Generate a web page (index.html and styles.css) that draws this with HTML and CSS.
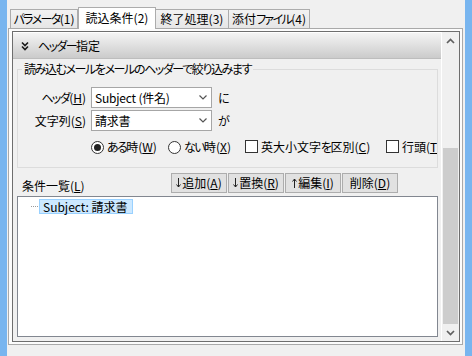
FILE: index.html
```html
<!DOCTYPE html>
<html lang="ja">
<head>
<meta charset="utf-8">
<title>読込条件</title>
<link rel="stylesheet" href="styles.css">
</head>
<body>
<div class="window">
  <div class="frame-side"></div>
  <div class="main">
    <div class="tabstrip">
      <div class="tab tab-1"><span class="kana">パラメータ</span>(1)</div>
      <div class="tab tab-active tab-2">読込条件(2)</div>
      <div class="tab tab-3">終了処理(3)</div>
      <div class="tab tab-4">添付<span class="kana">ファイル</span>(4)</div>
    </div>
    <div class="panel">
      <div class="scrollbox">
        <div class="content">
          <div class="section-bar">
            <svg class="chev-double" width="8" height="10" viewBox="0 0 8 10"><path d="M1 1.5 L4 4.5 L7 1.5 M1 5.5 L4 8.5 L7 5.5" fill="none" stroke="#1a1a1a" stroke-width="1.6"/></svg>
            <span><span class="kana">ヘッダー</span>指定</span>
          </div>
          <fieldset class="group">
            <legend class="legend-text">読み込むメールをメールのヘッダーで絞り込みます</legend>
            <div class="form-row">
              <span class="row-label"><span class="kana">ヘッダ</span>(<u>H</u>)</span>
              <div class="combo"><span class="combo-text">Subject (件名)</span><svg class="combo-arrow" width="8" height="5" viewBox="0 0 8 5"><path d="M0.5 0.5 L4 4 L7.5 0.5" fill="none" stroke="#555" stroke-width="1.2"/></svg></div>
              <span class="suffix">に</span>
            </div>
            <div class="form-row row-2">
              <span class="row-label">文字列(<u>S</u>)</span>
              <div class="combo"><span class="combo-text">請求書</span><svg class="combo-arrow" width="8" height="5" viewBox="0 0 8 5"><path d="M0.5 0.5 L4 4 L7.5 0.5" fill="none" stroke="#555" stroke-width="1.2"/></svg></div>
              <span class="suffix">が</span>
            </div>
            <div class="options-row">
              <span class="opt opt-w"><span class="radio checked"></span><span><span class="kana">ある</span>時(<u>W</u>)</span></span>
              <span class="opt opt-x"><span class="radio"></span><span><span class="kana">ない</span>時(<u>X</u>)</span></span>
              <span class="opt opt-c"><span class="checkbox"></span><span>英大小文字<span class="kana">を</span>区別(<u>C</u>)</span></span>
              <span class="opt opt-t"><span class="checkbox"></span><span>行頭(<u>T</u>)</span></span>
            </div>
          </fieldset>
          <div class="list-head">
            <span class="list-label">条件一覧(<u>L</u>)</span>
            <div class="buttons">
              <span class="btn"><svg class="arrow" width="5" height="10" viewBox="0 0 5 10"><path d="M2.5 0 V9 M0.5 6.5 L2.5 9 L4.5 6.5" fill="none" stroke="#222" stroke-width="1"/></svg>追加(<u>A</u>)</span>
              <span class="btn"><svg class="arrow" width="5" height="10" viewBox="0 0 5 10"><path d="M2.5 0 V9 M0.5 6.5 L2.5 9 L4.5 6.5" fill="none" stroke="#222" stroke-width="1"/></svg>置換(<u>R</u>)</span>
              <span class="btn"><svg class="arrow" width="5" height="10" viewBox="0 0 5 10"><path d="M2.5 10 V1 M0.5 3.5 L2.5 1 L4.5 3.5" fill="none" stroke="#222" stroke-width="1"/></svg>編集(<u>I</u>)</span>
              <span class="btn">削除(<u>D</u>)</span>
            </div>
          </div>
          <div class="list">
            <div class="tree-item">
              <span class="tree-line"></span>
              <span class="tree-label">Subject: 請求書</span>
            </div>
          </div>
        </div>
        <div class="vscroll">
          <div class="sb-btn"><svg width="9" height="6" viewBox="0 0 9 6"><path d="M1 5 L4.5 1.5 L8 5" fill="none" stroke="#606060" stroke-width="1.7"/></svg></div>
          <div class="sb-track"><div class="sb-thumb"></div></div>
          <div class="sb-btn"><svg width="9" height="6" viewBox="0 0 9 6"><path d="M1 1 L4.5 4.5 L8 1" fill="none" stroke="#606060" stroke-width="1.7"/></svg></div>
        </div>
      </div>
    </div>
  </div>
  <div class="frame-side"></div>
</div>
</body>
</html>
```

FILE: styles.css
```css
* { box-sizing: border-box; }
html, body {
  margin: 0;
  padding: 0;
  background: #f0f0f0;
}
body {
  font-family: "Noto Sans CJK JP", "Noto Sans", sans-serif;
  font-size: 12px;
  line-height: 16px;
  color: #000;
  font-feature-settings: "palt" 1;
}
u { text-decoration: underline; text-underline-offset: 1px; }

/* Meiryo UI-like narrow kana */
.kana { letter-spacing: -1.6px; }
.legend-text { letter-spacing: -1.4px; }
.combo-text { letter-spacing: -0.2px; }

.window {
  display: flex;
  width: 472px;
  height: 356px;
}
.frame-side {
  width: 7px;
  background: #78b5ef;
  flex-shrink: 0;
}
.main {
  width: 458px;
  display: flex;
  flex-direction: column;
}

/* tabs */
.tabstrip {
  height: 28px;
  display: flex;
  align-items: flex-end;
  padding-left: 3px;
}
.tab {
  height: 19px;
  border: 1px solid #acacac;
  border-bottom: none;
  background: linear-gradient(#f2f2f2, #e6e6e6);
  display: flex;
  align-items: center;
  justify-content: center;
  white-space: nowrap;
  flex-shrink: 0;
}
.tab-1 { width: 68px; }
.tab-2 { width: 78px; }
.tab-3 { width: 73px; border-left: none; }
.tab-4 { width: 81px; border-left: none; }
.tab-active {
  height: 22px;
  margin-bottom: -1px;
  background: #fff;
  position: relative;
  z-index: 1;
  align-items: flex-start;
  padding-top: 2px;
}

/* panel */
.panel {
  margin-left: 1px;
  width: 455px;
  height: 317px;
  border: 1px solid #a9a9a9;
  background: #fcfcfc;
  padding: 2px 2px 2px 3px;
}
.scrollbox {
  display: flex;
  height: 311px;
  border: 1px solid #6e6e6e;
  background: #f0f0f0;
}
.content {
  width: 429px;
  border-top: 1px solid #fff;
  border-right: 1px solid #fff;
  overflow: hidden;
  display: flex;
  flex-direction: column;
}
.section-bar {
  height: 26px;
  flex-shrink: 0;
  display: flex;
  align-items: center;
  padding-left: 8px;
  gap: 9px;
  background: linear-gradient(#f4f4f4, #cbcbcb);
  border-bottom: 1px solid #bdbdbd;
}
.chev-double { display: block; }

/* group */
.group {
  margin: 3px 3px 0 4px;
  padding: 11px 0 12px 0;
  border: 1px solid #dcdcdc;
  min-width: 0;
  flex-shrink: 0;
}
.group legend {
  margin-left: 4px;
  padding: 0 2px;
  line-height: 14px;
  white-space: nowrap;
}
.form-row {
  display: flex;
  align-items: center;
  height: 21px;
}
.row-2 { margin-top: 2px; }
.row-label {
  width: 68px;
  text-align: right;
  margin-right: 5px;
  white-space: nowrap;
}
.combo {
  width: 121px;
  height: 21px;
  border: 1px solid #a6a6a6;
  background: #fff;
  display: flex;
  align-items: center;
  padding: 0 3px 0 3px;
}
.combo-text { flex: 1; white-space: nowrap; }
.combo-arrow { display: block; margin-right: 1px; }
.suffix { margin-left: 6px; }

.options-row {
  margin-top: 8px;
  height: 16px;
  display: flex;
  align-items: center;
  padding-left: 73px;
  overflow: hidden;
  white-space: nowrap;
}
.opt {
  display: flex;
  align-items: center;
  flex-shrink: 0;
}
.opt-w, .opt-x { width: 77px; }
.opt-c { width: 141px; }
.radio, .checkbox {
  width: 13px;
  height: 13px;
  border: 1px solid #333;
  background: #fff;
  margin-right: 3px;
  flex-shrink: 0;
  display: flex;
  align-items: center;
  justify-content: center;
}
.radio { border-radius: 50%; }
.radio.checked::after {
  content: "";
  width: 7px;
  height: 7px;
  border-radius: 50%;
  background: #222;
}
.checkbox { margin-top: -2px; }

/* list head */
.list-head {
  margin-top: 5px;
  height: 20px;
  display: flex;
  align-items: flex-end;
  padding-left: 9px;
  flex-shrink: 0;
}
.list-label {
  width: 149px;
  white-space: nowrap;
  margin-bottom: -1px;
}
.buttons {
  display: flex;
  gap: 1px;
  align-self: stretch;
}
.btn {
  width: 56px;
  height: 20px;
  border: 1px solid #adadad;
  background: #e1e1e1;
  display: flex;
  align-items: center;
  justify-content: center;
  white-space: nowrap;
}
.arrow {
  display: block;
  margin-right: 1px;
  flex-shrink: 0;
}

/* list */
.list {
  margin: 3px 3px 0 4px;
  height: 141px;
  flex-shrink: 0;
  border: 1px solid #828790;
  background: #fff;
  padding: 2px 0 0 13px;
}
.tree-item {
  display: flex;
  align-items: center;
  height: 15px;
}
.tree-line {
  width: 8px;
  height: 1px;
  background: repeating-linear-gradient(90deg, #9a9a9a 0 1px, transparent 1px 2px);
}
.tree-label {
  height: 15px;
  line-height: 13px;
  border: 1px solid #99d1ff;
  background: #cce8ff;
  padding: 0 4px 0 3px;
  white-space: nowrap;
}

/* scrollbar */
.vscroll {
  width: 17px;
  display: flex;
  flex-direction: column;
  background: #f0f0f0;
}
.sb-btn {
  height: 17px;
  display: flex;
  align-items: center;
  justify-content: center;
  flex-shrink: 0;
}
.sb-btn svg { display: block; }
.sb-track {
  flex: 1;
  padding: 99px 1px 0 1px;
  display: flex;
  flex-direction: column;
}
.sb-thumb {
  flex: 1;
  background: #cdcdcd;
}
```
